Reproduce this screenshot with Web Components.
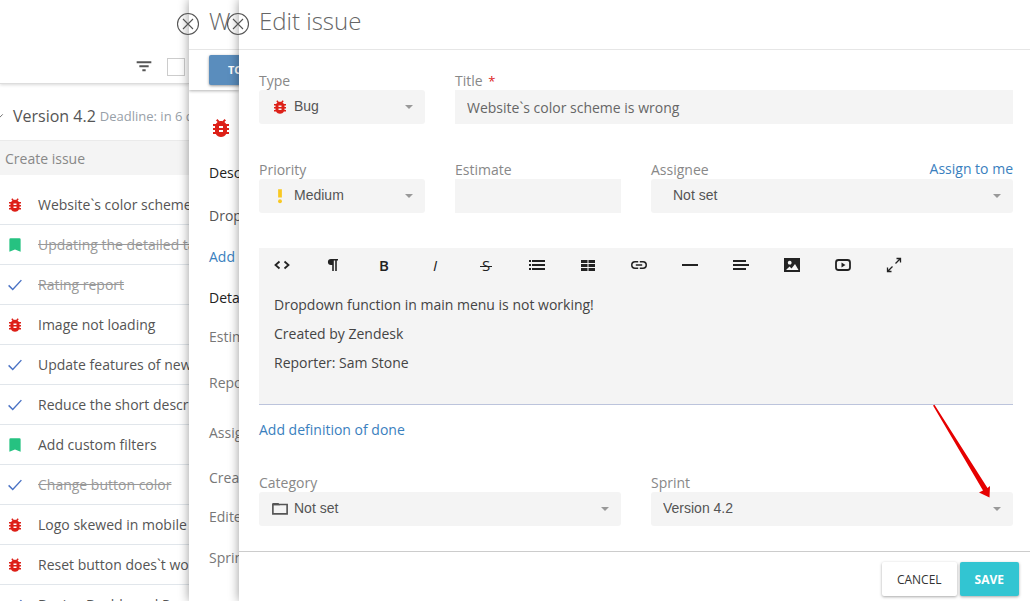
<!DOCTYPE html>
<html lang="en">
<head>
<meta charset="utf-8">
<title>Edit issue</title>
<style>
  html, body { margin: 0; height: 100%; }
  body { font: 14px/20px "Open Sans", sans-serif; color: #555; background: #fff; overflow: hidden; }
</style>
</head>
<body>
<issue-app></issue-app>

<script>
const ICONS = {
  bug: '<path d="M14,12H10V10H14M14,16H10V14H14M20,8H17.19C16.74,7.22 16.12,6.55 15.37,6.04L17,4.41L15.59,3L13.42,5.17C12.96,5.06 12.5,5 12,5C11.5,5 11.04,5.06 10.59,5.17L8.41,3L7,4.41L8.62,6.04C7.88,6.55 7.26,7.22 6.81,8H4V10H6.09C6.04,10.33 6,10.66 6,11V12H4V14H6V15C6,15.34 6.04,15.67 6.09,16H4V18H6.81C7.85,19.79 9.78,21 12,21C14.22,21 16.15,19.79 17.19,18H20V16H17.91C17.96,15.67 18,15.34 18,15V14H20V12H18V11C18,10.66 17.96,10.33 17.91,10H20V8Z"/>',
  story: '<path d="M6 3h12a1.5 1.5 0 0 1 1.5 1.5V21L12 18 4.5 21V4.5A1.5 1.5 0 0 1 6 3z"/>',
  task: '<path d="M3.5 12.5L9 18 20.5 5.5" fill="none" stroke="currentColor" stroke-width="1.900"/>',
  medium: '<path d="M9.500 3h5v11h-5z"/><circle cx="12" cy="19" r="2.600"/>',
  folder: '<path d="M2.500 6h19v12.500h-19z" fill="none" stroke="currentColor" stroke-width="2.200"/><path d="M2 4h8l2 3H2z"/>',
  filter: '<path d="M1 5h22v3H1zM5 11h14v3H5zM9.500 17h5v3h-5z"/>',
  chevron: '<path d="M4 9l8 8 9-9" fill="none" stroke="currentColor" stroke-width="2"/>',
  code: '<path d="M9.500 8.500L5.500 12l4 3.500M14.500 8.500l4 3.500-4 3.500" fill="none" stroke="currentColor" stroke-width="1.800"/>',
  paragraph: '<path d="M10 6h7v1.500h-1.200V18h-1.600V7.500h-1.400V18h-1.600v-6H10A3.100 3 0 0 1 10 6z"/>',
  list: '<path d="M4 7h2v2H4zM4 11h2v2H4zM4 15h2v2H4zM7 7h13v2H7zM7 11h13v2H7zM7 15h13v2H7z"/>',
  table: '<path d="M5 7h6.500v3H5zM12.500 7H19v3h-6.500zM5 11h6.500v3H5zM12.500 11H19v3h-6.500zM5 15h6.500v3H5zM12.500 15H19v3h-6.500z"/>',
  link: '<path transform="translate(2.400 2.400) scale(.8)" d="M3.900,12C3.900,10.290 5.290,8.900 7,8.900H11V7H7A5,5 0 0,0 2,12A5,5 0 0,0 7,17H11V15.100H7C5.290,15.100 3.900,13.710 3.900,12M8,13H16V11H8V13M17,7H13V8.900H17C18.710,8.900 20.100,10.290 20.100,12C20.100,13.710 18.710,15.100 17,15.100H13V17H17A5,5 0 0,0 22,12A5,5 0 0,0 17,7Z"/>',
  rule: '<path d="M4 11h16v2H4z"/>',
  align: '<path d="M4 7h13v2H4zM4 11h16v2H4zM4 15h13v2H4z"/>',
  image: '<path fill-rule="evenodd" d="M4 5h16v14H4zM6 17h12.500l-3.500-6-3.500 4.500L9.500 13.500zM9.700 7.800a1.900 1.900 0 1 0 .01 0z"/>',
  video: '<rect x="5" y="7" width="14" height="10" rx="2.500" fill="none" stroke="currentColor" stroke-width="1.800"/><path d="M10.500 9.500l4 2.500-4 2.500z"/>',
  expand: '<path d="M14.500 5.500h4v4M18.500 5.500l-5 5M9.500 18.500h-4v-4M5.500 18.500l5-5" fill="none" stroke="currentColor" stroke-width="1.300"/>',
  close: '<circle cx="12" cy="12" r="10.500" fill="none" stroke="currentColor" stroke-width="1.100"/><path d="M7 7l10 10M17 7L7 17" fill="none" stroke="currentColor" stroke-width="1.100"/>'
};
const COLORS = { bug: '#dd2018', story: '#26c281', task: '#4a72c4', medium: '#f8c822' };

const RESET = `
  * { box-sizing: border-box; }
  p, h1, h2 { margin: 0; font-weight: 400; }
  a { color: #3a80be; text-decoration: none; }
  button { border: 0; padding: 0; background: none; font: inherit; color: inherit; cursor: pointer; }
`;

/* Base: renders its template() once into an open shadow root. */
class Base extends HTMLElement {
  connectedCallback() {
    if (this.shadowRoot) return;
    const t = document.createElement('template');
    t.innerHTML = '<style>' + RESET + '</style>' + this.template();
    this.attachShadow({ mode: 'open' }).append(t.content.cloneNode(true));
  }
  attr(name, fallback = '') { return this.getAttribute(name) ?? fallback; }
}

customElements.define('ui-icon', class extends Base {
  template() {
    const n = this.attr('name'), s = this.attr('size', '24');
    return `<style>
      :host { display: inline-block; flex: none; width: ${s}px; height: ${s}px; ${COLORS[n] ? `color: ${COLORS[n]};` : ''} }
      svg { display: block; width: 100%; height: 100%; fill: currentColor; }
    </style><svg viewBox="0 0 24 24" aria-hidden="true">${ICONS[n]}</svg>`;
  }
});

customElements.define('issue-row', class extends Base {
  template() {
    return `<style>
      :host { display: flex; align-items: center; gap: 14px; height: 40px; padding-left: 6px;
              border-bottom: 1px solid #e1e6eb; white-space: nowrap; color: #555; }
      :host([done]) span { text-decoration: line-through; color: #999; }
    </style><ui-icon name="${this.attr('type')}" size="18"></ui-icon><span><slot></slot></span>`;
  }
});

customElements.define('issue-board', class extends Base {
  template() {
    return `<style>
      :host { display: block; overflow: hidden; white-space: nowrap; }
      header { display: flex; align-items: flex-end; justify-content: flex-end; gap: 15px; height: 84px;
               padding: 0 4px 7px 0; border-bottom: 1px solid #ddd; box-shadow: 0 1px 3px rgba(0,0,0,.15); color: #555; }
      header button { display: flex; padding-bottom: 2px; }
      header input { appearance: none; width: 18px; height: 18px; margin: 0; border: 1px solid #ccc; background: #fff; }
      h2 { display: flex; align-items: center; gap: 4px; height: 56px; padding-top: 8px; font-size: 16px; }
      h2 small { font-size: 13px; color: #98a0a8; }
      h2 ui-icon { margin-left: -6px; margin-right: 5px; }
      input.create { display: block; width: 100%; height: 35px; margin-bottom: 10px; padding: 0 5px;
              border: 0; border-top: 1px solid #eaeaea; background: #f4f4f4; font: inherit; color: #888; }
      input.create::placeholder { color: #888; opacity: 1; }
    </style>
    <header>
      <button aria-label="Filter"><ui-icon name="filter" size="16"></ui-icon></button>
      <input type="checkbox" aria-label="Select all">
    </header>
    <h2><ui-icon name="chevron" size="10"></ui-icon>Version 4.2 <small>Deadline: in 6 days</small></h2>
    <input class="create" aria-label="Create issue" placeholder="Create issue">
    <issue-row type="bug">Website\`s color scheme</issue-row>
    <issue-row type="story" done>Updating the detailed task</issue-row>
    <issue-row type="task" done>Rating report</issue-row>
    <issue-row type="bug">Image not loading</issue-row>
    <issue-row type="task">Update features of new</issue-row>
    <issue-row type="task">Reduce the short descr</issue-row>
    <issue-row type="story">Add custom filters</issue-row>
    <issue-row type="task" done>Change button color</issue-row>
    <issue-row type="bug">Logo skewed in mobile</issue-row>
    <issue-row type="bug">Reset button does\`t wo</issue-row>
    <issue-row type="task">Design Dashboard P</issue-row>`;
  }
});

customElements.define('side-sheet', class extends Base {
  template() {
    return `<style>
      :host { display: block; position: relative; min-width: 0; height: 100%; background: #fff;
              box-shadow: 0 0 10px rgba(0,0,0,.4); }
      .clip { display: flex; flex-direction: column; height: 100%; overflow: hidden; }
      h1 { flex: none; height: 50px; padding: 4px 20px 0; border-bottom: 1px solid #e6e6e6;
           font-size: 24px; font-weight: 300; line-height: 34px; color: #666; white-space: nowrap; }
      .body { flex: 1; min-height: 0; overflow: hidden; }
      .close { position: absolute; left: -13px; top: 12px; display: flex; border-radius: 50%; color: #555; z-index: 1; }
    </style>
    <div class="clip">
      <h1>${this.attr('heading')}</h1>
      <div class="body"><slot></slot></div>
      <slot name="footer"></slot>
    </div>
    <button class="close" aria-label="Close"><ui-icon name="close" size="24"></ui-icon></button>`;
  }
});

customElements.define('issue-details', class extends Base {
  template() {
    return `<style>
      :host { display: block; white-space: nowrap; }
      .bar { padding: 5px 20px; box-shadow: 0 1px 3px rgba(0,0,0,.3); }
      .bar button { height: 30px; padding: 0 19px; border-radius: 2px; background: #5a8dbd; color: #fff;
                    font-size: 11px; font-weight: 700; box-shadow: 0 1px 3px rgba(0,0,0,.4); }
      .content { display: flex; flex-direction: column; align-items: flex-start; padding: 26px 20px; }
      h2 { margin-top: 21px; font-size: 14px; font-weight: 500; color: #222; }
      ui-icon + h2, p { margin-top: 23px; }
      a { margin-top: 21px; }
      dl { margin: 19px 0 0; display: grid; row-gap: 26px; color: #777; }
      dl.people { margin-top: 30px; row-gap: 25px; }
      dl.planning { row-gap: 21px; }
    </style>
    <div class="bar"><button>TO DO</button></div>
    <div class="content">
      <ui-icon name="bug" size="24"></ui-icon>
      <h2>Description</h2>
      <p>Dropdown</p>
      <a href="#">Add</a>
      <h2>Details</h2>
      <dl><dt>Estimate</dt><dt>Reporter</dt></dl>
      <dl class="people"><dt>Assignee</dt><dt>Created</dt></dl>
      <dl class="planning"><dt>Edited</dt><dt>Sprint</dt></dl>
    </div>`;
  }
});

const FIELD = `
  :host { display: block; position: relative; min-width: 0; }
  label { display: block; height: 20px; padding-top: 1px; color: #888; white-space: nowrap; }
`;

customElements.define('text-field', class extends Base {
  template() {
    return `<style>${FIELD}
      label b { margin-left: 2px; color: #d22; font-size: 13px; font-weight: 400; }
      input { display: block; width: 100%; height: 34px; padding: 1px 12px 0; border: 0; border-radius: 0; background: #f4f4f4;
              font: inherit; color: #666; }
    </style>
    <label for="c">${this.attr('label')}${this.hasAttribute('required') ? ' <b>*</b>' : ''}</label>
    <input id="c" value="${this.attr('value')}">`;
  }
});

customElements.define('select-field', class extends Base {
  template() {
    const icon = this.attr('icon');
    return `<style>${FIELD}
      .box { display: grid; grid-template-columns: 12px 18px 1fr 20px; align-items: center; height: 34px;
             border-radius: 3px; background: #f4f4f4; color: #555; }
      select { grid-area: 1 / 1 / 2 / -1; width: 100%; height: 34px; appearance: none; border: 0; border-radius: 3px;
               padding: 0 24px 2px ${icon ? 35 : this.attr('indent', '12')}px; background: none;
               font: 14px "Liberation Sans", sans-serif; color: #555; cursor: pointer; }
      ui-icon { grid-area: 1 / 2; pointer-events: none; }
      i { grid-area: 1 / 4; width: 8px; height: 4px; background: #999; clip-path: polygon(0 0, 100% 0, 50% 100%); pointer-events: none; }
    </style>
    <label for="c">${this.attr('label')}</label>
    <div class="box">
      <select id="c"><option>${this.attr('value')}</option></select>
      ${icon ? `<ui-icon name="${icon}" size="18"></ui-icon>` : ''}
      <i></i>
    </div>
    <slot></slot>`;
  }
});

customElements.define('rich-editor', class extends Base {
  template() {
    const tool = (label, body) => `<button aria-label="${label}">${body}</button>`;
    const icon = n => `<ui-icon name="${n}" size="24"></ui-icon>`;
    return `<style>
      :host { display: block; border-bottom: 1px solid #bcc4dc; background: #f4f4f4; color: #444; }
      .tools { display: flex; gap: 5px; height: 34px; color: #222; }
      button { display: grid; place-items: center; width: 46px; font-size: 15px; }
      .b { font-weight: 600; }
      .i { font-style: italic; }
      .s { padding: 0 2px; background: linear-gradient(#222, #222) 0 11px / 100% 1px no-repeat; }
      .text { display: grid; gap: 10px; padding: 13px 15px 32px; line-height: 19px; outline: 0; }
    </style>
    <div class="tools" role="toolbar" aria-label="Formatting">
      ${tool('HTML', icon('code'))}${tool('Formatting', icon('paragraph'))}
      ${tool('Bold', '<span class="b">B</span>')}${tool('Italic', '<span class="i">I</span>')}
      ${tool('Strikethrough', '<span class="s">S</span>')}
      ${tool('Lists', icon('list'))}${tool('Table', icon('table'))}${tool('Link', icon('link'))}
      ${tool('Horizontal rule', icon('rule'))}${tool('Align', icon('align'))}${tool('Image', icon('image'))}
      ${tool('Video', icon('video'))}${tool('Fullscreen', icon('expand'))}
    </div>
    <div class="text" contenteditable="true" role="textbox" aria-multiline="true" aria-label="Description">
      <p>Dropdown function in main menu is not working!</p>
      <p>Created by Zendesk</p>
      <p>Reporter: Sam Stone</p>
    </div>`;
  }
});

customElements.define('issue-form', class extends Base {
  template() {
    return `<style>
      :host { display: block; padding: 20px 17px 25px 20px; }
      .grid { display: grid; grid-template-columns: repeat(4, minmax(0, 1fr)); column-gap: 30px; row-gap: 35px; }
      .w2 { grid-column: span 2; }
      .w3 { grid-column: span 3; }
      .w4 { grid-column: span 4; }
      .assign { position: absolute; right: 0; top: 0; }
      .done { display: block; margin: 15px 0 32px; width: fit-content; }
      .arrow { position: absolute; right: 22px; top: -68px; width: 60px; height: 96px; fill: #e60000; pointer-events: none; }
    </style>
    <div class="grid">
      <select-field label="Type" value="Bug" icon="bug"></select-field>
      <text-field class="w3" label="Title" value="Website\`s color scheme is wrong" required></text-field>
      <select-field label="Priority" value="Medium" icon="medium"></select-field>
      <text-field label="Estimate"></text-field>
      <select-field class="w2" label="Assignee" value="Not set" indent="22"><a class="assign" href="#">Assign to me</a></select-field>
      <rich-editor class="w4"></rich-editor>
    </div>
    <a class="done" href="#">Add definition of done</a>
    <div class="grid">
      <select-field class="w2" label="Category" value="Not set" icon="folder"></select-field>
      <select-field class="w2" label="Sprint" value="Version 4.2">
        <svg class="arrow" viewBox="0 0 60 96" aria-hidden="true"><path d="M2 1.500L3.500 .7 56.500 84 59 82 58.500 93.500 48 88.500 52 86.500z"/></svg>
      </select-field>
    </div>`;
  }
});

customElements.define('form-actions', class extends Base {
  template() {
    return `<style>
      :host { flex: none; display: flex; justify-content: flex-end; gap: 3px; padding: 10px 11px 5px; border-top: 1px solid #ccc; }
      button { height: 34px; padding: 1px 15px 0; border-radius: 2px; font-size: 12px; background: #fff; color: #333;
               box-shadow: 0 1px 3px rgba(0,0,0,.35); }
      .save { background: #32c5d2; color: #fff; font-weight: 700; }
    </style>
    <button>CANCEL</button><button class="save">SAVE</button>`;
  }
});

customElements.define('issue-app', class extends Base {
  template() {
    return `<style>
      :host { display: grid; grid-template-columns: 189px 50px minmax(0, 1fr); grid-template-rows: 100vh; overflow: hidden; }
    </style>
    <issue-board></issue-board>
    <side-sheet heading="W"><issue-details></issue-details></side-sheet>
    <side-sheet heading="Edit issue"><issue-form></issue-form><form-actions slot="footer"></form-actions></side-sheet>`;
  }
});
</script>
</body>
</html>
